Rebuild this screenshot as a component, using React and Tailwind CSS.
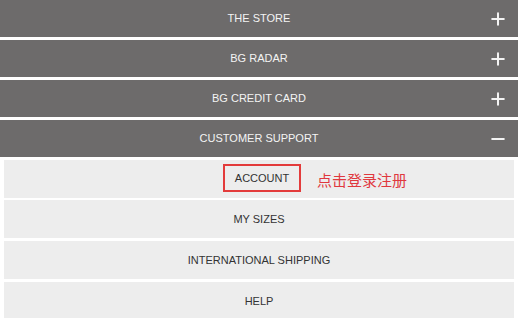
import { Plus, Minus } from "lucide-react";

const sections = [
  { title: "THE STORE", open: false },
  { title: "BG RADAR", open: false },
  { title: "BG CREDIT CARD", open: false },
  { title: "CUSTOMER SUPPORT", open: true },
];

const links = ["ACCOUNT", "MY SIZES", "INTERNATIONAL SHIPPING", "HELP"];

const App = () => {
  return (
    <div
      className="w-[518px] h-[318px] overflow-hidden bg-white flex flex-col gap-[3px]"
      style={{ fontFamily: '"Liberation Sans", Arial, sans-serif' }}
    >
      {sections.map((s) => (
        <div
          key={s.title}
          className="relative h-[37px] shrink-0 bg-[#6d6b6b] text-[#f4f4f4] text-[11px] flex items-center justify-center"
        >
          {s.title}
          <span className="absolute right-[10px] top-1/2 -translate-y-1/2">
            {s.open ? (
              <Minus size={20} strokeWidth={2.4} />
            ) : (
              <Plus size={20} strokeWidth={2.4} />
            )}
          </span>
        </div>
      ))}
      {links.map((l, i) => (
        <div
          key={l}
          className={
            i === 1
              ? "-mt-[1px] mx-[4px] h-[38px] shrink-0 bg-[#ededed] text-[#333] text-[11px] flex items-center justify-center"
              : "mx-[4px] h-[38px] shrink-0 bg-[#ededed] text-[#333] text-[11px] flex items-center justify-center"
          }
        >
          {i === 0 ? (
            <div className="relative translate-x-[3px] -translate-y-[1px]">
              <span className="block border-2 border-[#e33b3b] w-[78px] h-[28px] leading-[24px] text-center">
                {l}
              </span>
              <span
                className="absolute left-[94px] top-[5px] whitespace-nowrap text-[15px] text-[#e0383e]"
                style={{ fontFamily: '"Noto Sans CJK SC", sans-serif' }}
              >
                点击登录注册
              </span>
            </div>
          ) : (
            l
          )}
        </div>
      ))}
    </div>
  );
};

export default App;
